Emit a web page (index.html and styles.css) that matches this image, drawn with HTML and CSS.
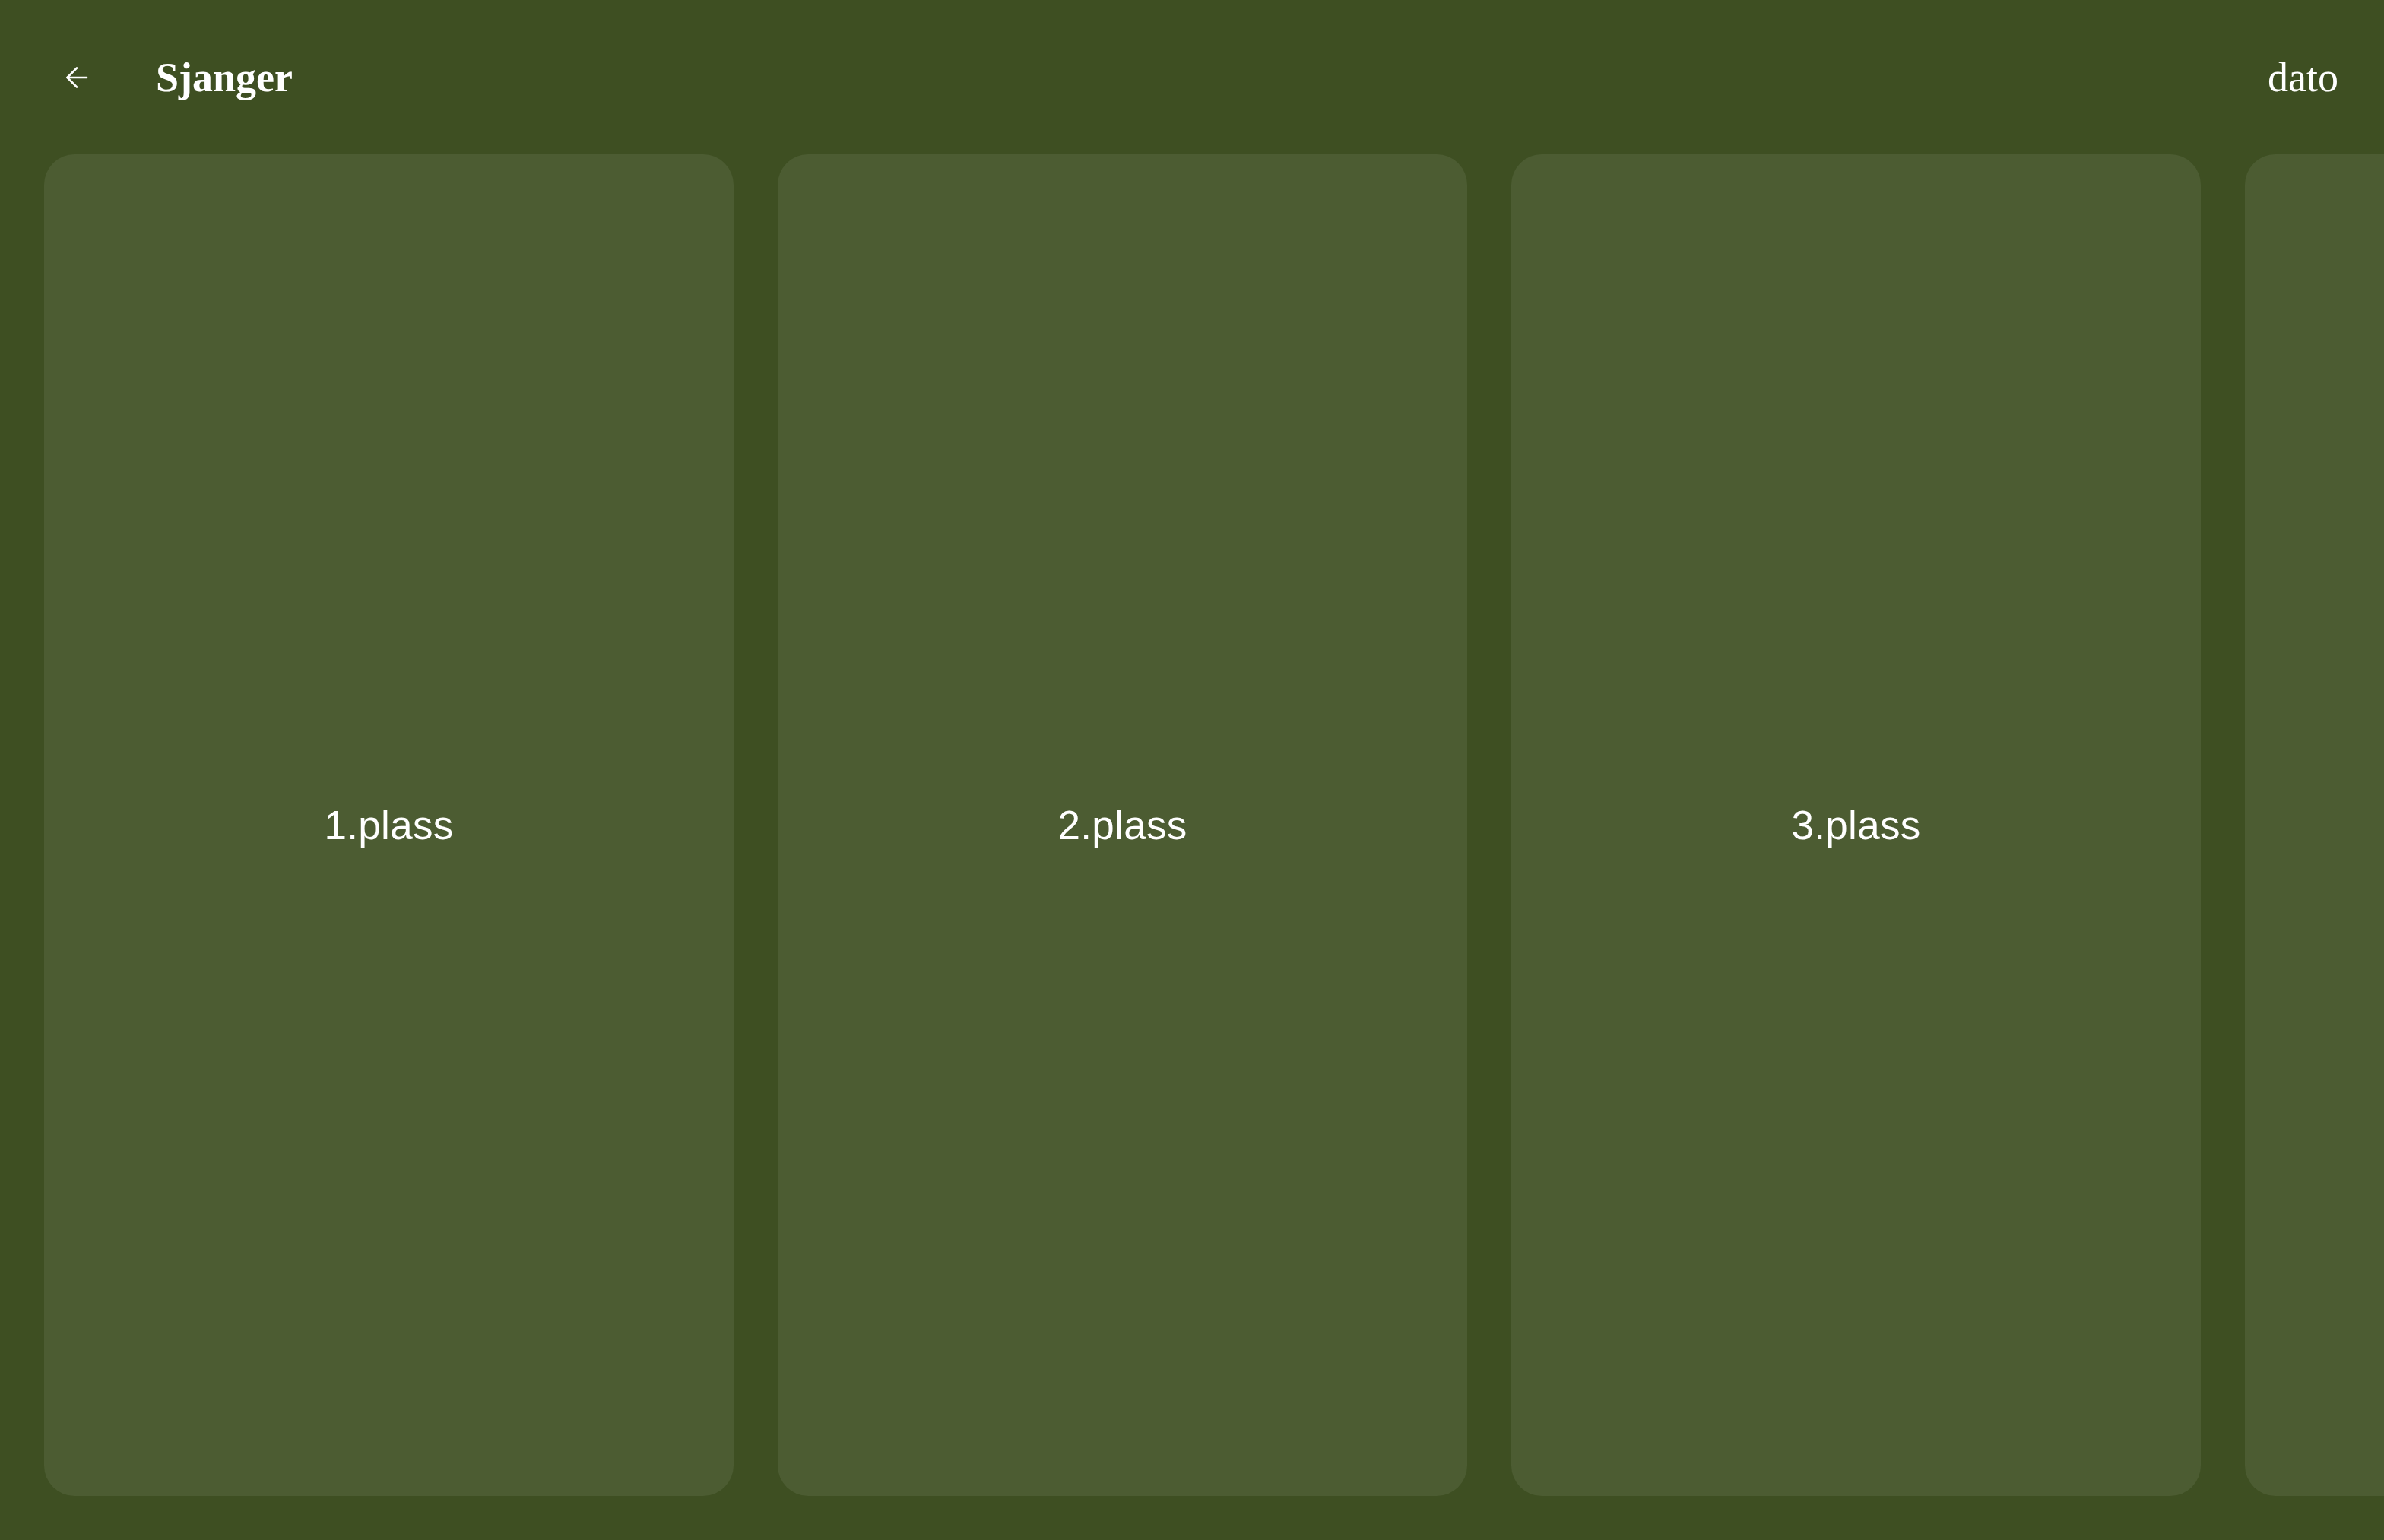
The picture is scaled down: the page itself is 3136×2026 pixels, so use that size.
FILE: index.html
```html
<!DOCTYPE html>
<html lang="no">
<head>
<meta charset="utf-8">
<title>Sjanger</title>
<link rel="stylesheet" href="styles.css">
</head>
<body>
<div class="page">
  <header class="topbar">
    <div class="left">
      <button class="back" aria-label="Tilbake">
        <svg width="30" height="30" viewBox="0 0 30 30" fill="none" stroke="#ffffff" stroke-width="2.6" stroke-linecap="round" stroke-linejoin="round">
          <path d="M28 15H2.5"/>
          <path d="M15 2.5L2.5 15L15 27.5"/>
        </svg>
      </button>
      <h1 class="title">Sjanger</h1>
    </div>
    <div class="date">dato</div>
  </header>
  <main class="cards">
    <div class="card"><span class="label">1.plass</span></div>
    <div class="card"><span class="label">2.plass</span></div>
    <div class="card"><span class="label">3.plass</span></div>
    <div class="card"><span class="label"></span></div>
  </main>
</div>
</body>
</html>
```
FILE: styles.css
```css
html, body {
  margin: 0;
  padding: 0;
  background: #3e4f22;
}
.page {
  width: 3136px;
  height: 2026px;
  overflow: hidden;
  display: flex;
  flex-direction: column;
  background: #3e4f22;
}
.topbar {
  height: 203px;
  flex: 0 0 203px;
  display: flex;
  align-items: center;
  justify-content: space-between;
  padding: 0 60px 0 86px;
  box-sizing: border-box;
}
.left {
  display: flex;
  align-items: center;
  gap: 89px;
}
.back {
  background: none;
  border: 0;
  padding: 0;
  width: 30px;
  height: 30px;
  display: flex;
  align-items: center;
  justify-content: center;
}
.title {
  margin: 0;
  font-family: "Liberation Serif", "DejaVu Serif", serif;
  font-weight: 700;
  font-size: 54px;
  color: #ffffff;
  line-height: 1;
}
.date {
  font-family: "Liberation Serif", serif;
  font-weight: 400;
  font-size: 54px;
  color: #ffffff;
  line-height: 1;
}
.cards {
  flex: 1;
  display: flex;
  gap: 58px;
  padding: 0 0 58px 58px;
  box-sizing: border-box;
}
.card {
  flex: 0 0 907px;
  background: #4c5c32;
  border-radius: 40px;
  display: flex;
  align-items: center;
  justify-content: center;
}
.label {
  font-family: "Liberation Sans", Arial, sans-serif;
  font-size: 53px;
  letter-spacing: 0.3px;
  color: #ffffff;
}
```
